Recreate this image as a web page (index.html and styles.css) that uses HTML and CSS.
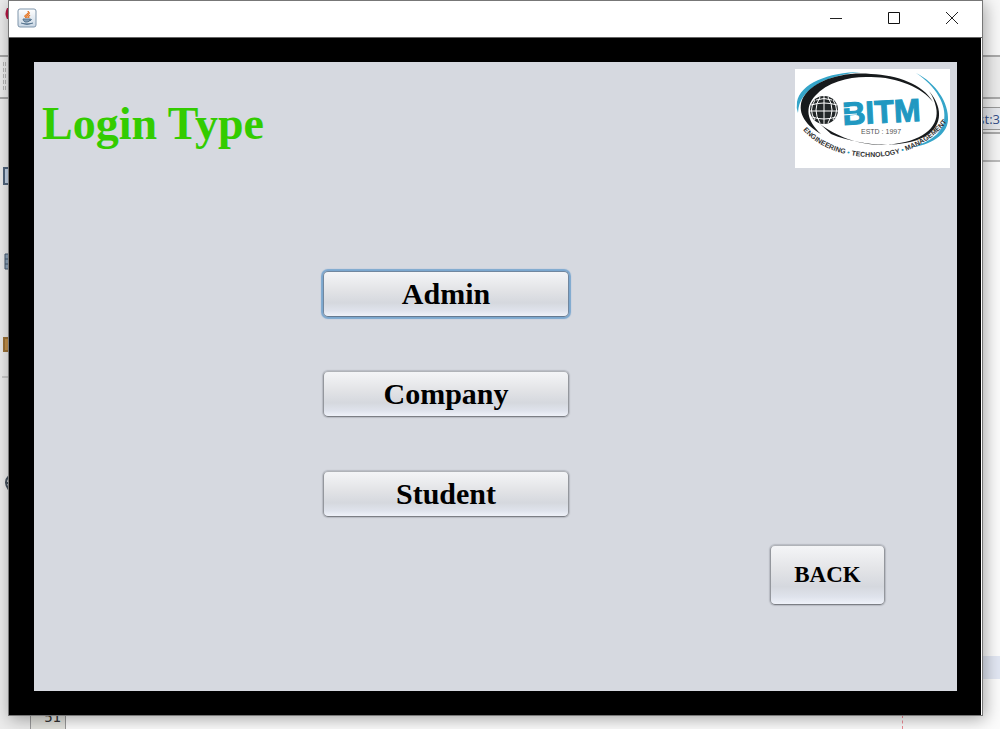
FILE: index.html
```html
<!DOCTYPE html>
<html lang="en">
<head>
<meta charset="utf-8">
<title>Login Type</title>
<link rel="stylesheet" href="styles.css">
</head>
<body>
<div class="desktop">
  <svg class="edge edge-left" width="9" height="729" viewBox="0 0 9 729" aria-hidden="true">
    <path d="M9 8H7Q4 14 7 19H9Z" fill="#b51643"/>
    <path d="M0 56H9M0 98H9" stroke="#a5a5a5" stroke-width="2"/>
    <path d="M3.500 62V92M5.500 62V92" stroke="#b5b5b5" stroke-dasharray="4 2"/>
    <path d="M9 168H4V184H9" fill="#c4d4e8" stroke="#50647c" stroke-width="2"/>
    <path d="M5 254H9V269H5ZM5 259H9M5 264H9" fill="#8fa6bd" stroke="#44586e"/>
    <path d="M9 338H4V351H9" fill="#c4914a" stroke="#9c7238" stroke-width="2"/>
    <path d="M2 377H9" stroke="#aaa"/>
    <path d="M9 476Q3 482 9 490M6 483H9" fill="none" stroke="#44505c" stroke-width="2"/>
  </svg>
  <div class="edge edge-right" aria-hidden="true">
    <div class="tab-gap"></div>
    <div class="tab-bar"><span>st:3</span></div>
    <div class="tool-bar"></div>
    <div class="editor-row"></div>
  </div>
  <div class="edge edge-bottom" aria-hidden="true"><span class="gutter">51</span><span class="margin-line"></span></div>

  <div class="window">
    <header class="title-bar">
      <svg class="java" width="20" height="20" viewBox="0 0 20 20" role="img" aria-label="Java">
        <defs><linearGradient id="jg" x2="0" y2="1"><stop stop-color="#fff"/><stop offset="1" stop-color="#c8d6e4"/></linearGradient></defs>
        <rect x="1" y="1" width="18" height="18" rx="2" fill="url(#jg)" stroke="#7e95ab"/>
        <path d="M9 10Q6 8 10 6Q12 5 11 3Q14 5 11 7Q9 8 10 10M11 10Q10 8 13 7Q11 9 12 10" fill="#ed9450" stroke="#e37a30"/>
        <path d="M6 11H13Q13 14 10 14H8Q6 13 6 11M13 11Q16 11 13 13M4 15Q10 18 16 15" fill="#839bb2" stroke="#587690"/>
      </svg>
      <div class="window-controls">
        <button type="button" aria-label="Minimize"><svg width="14" height="14" viewBox="0 0 14 14"><path d="M1 7.500H13" stroke="#222"/></svg></button>
        <button type="button" aria-label="Maximize"><svg width="14" height="14" viewBox="0 0 14 14"><path d="M1.500 1.500H12.500V12.500H1.500Z" fill="none" stroke="#111"/></svg></button>
        <button type="button" aria-label="Close"><svg width="14" height="14" viewBox="0 0 14 14"><path d="M1 1L13 13M13 1L1 13" stroke="#222"/></svg></button>
      </div>
    </header>
    <div class="frame">
      <main class="panel">
        <div class="heading">
          <h1>Login Type</h1>
          <svg class="logo" width="155" height="99" viewBox="0 0 155 99" role="img" aria-label="BITM Engineering Technology Management">
            <rect width="155" height="99" fill="#fff"/>
            <path d="M66 3C33 3 5 15 2 33Q1 39 3 44Q3 25 28 12Q45 5 66 3Z" fill="#35a5c9"/>
            <path d="M76 5C45 2 15 13 7 31C2 45 12 57 26 65C11 51 10 38 20 27C33 12 56 7 76 8C102 8 128 19 138 33C128 15 102 6 76 5Z" fill="#171a1c"/>
            <path d="M134 22C150 41 146 59 129 68C106 80 65 77 36 65L25 55C43 69 72 79 99 75C131 71 145 56 141 38Q139 29 134 22Z" fill="#171a1c"/>
            <path d="M121 4C141 17 152 36 149 52C147 65 133 74 114 79C136 76 152 66 153 51C154 34 141 14 121 4Z" fill="#35a5c9"/>
            <circle cx="29" cy="41" r="14" fill="#222627"/>
            <path d="M29 27V55M25 28Q17 41 25 54M33 28Q41 41 33 54M20 31Q13 41 20 51M38 31Q45 41 38 51M16 36Q29 32 42 36M15 42H43M17 48Q29 52 41 48M21 31Q29 28 37 31" fill="none" stroke="#fff"/>
            <text class="logo-name" x="48" y="56" transform="rotate(-3 48 56)">BITM</text>
            <path d="M47 39L62 38M47 46L62 45" stroke="#fff"/>
            <text class="logo-year" x="66" y="65">ESTD : 1997</text>
            <path id="motto" d="M8 61C38 96 119 103 157 46" fill="none"/>
            <text class="logo-motto"><textPath href="#motto">ENGINEERING <tspan fill="#2597bc">•</tspan> TECHNOLOGY <tspan fill="#2597bc">•</tspan> MANAGEMENT</textPath></text>
          </svg>
        </div>
        <nav class="choices" aria-label="Login type">
          <button type="button" class="btn selected">Admin</button>
          <button type="button" class="btn">Company</button>
          <button type="button" class="btn">Student</button>
        </nav>
        <button type="button" class="btn back">BACK</button>
      </main>
    </div>
  </div>
</div>
</body>
</html>
```
FILE: styles.css
```css
* { box-sizing: border-box; }
body { margin: 0; font-family: "Liberation Serif", serif; }
.desktop {
  position: relative;
  display: flex;
  min-height: 100vh;
  padding: 0 17px 13px 8px;
  background: #fcfcfc;
  overflow: hidden;
}
.edge { position: absolute; }
.edge-left { left: 0; top: 0; background: #ececec; }
.edge-right { top: 0; right: 0; bottom: 0; width: 18px; }
.tab-gap { height: 99px; background: linear-gradient(#f8f8f8 0 55px, #aaa 55px 57px, #ececec 57px 97px, #aaa 97px); }
.tab-bar {
  height: 35px;
  padding-top: 8px;
  background: #f0f0f0;
  border-bottom: 2px solid #aaa;
}
.tab-bar span {
  display: flex;
  justify-content: flex-end;
  height: 23px;
  border: 1px solid #999;
  border-right: 0;
  background: #e6e8ec;
  color: #334f88;
  font: 13px/23px "Open Sans", sans-serif;
}
.tool-bar { height: 28px; border-bottom: 2px solid #bbb; background: #f5f5f5; }
.editor-row { height: 23px; margin-top: 494px; background: #e2e7f3; }
.edge-bottom { left: 0; right: 0; bottom: 0; height: 14px; padding: 0 97px 0 30px; display: flex; justify-content: space-between; background: linear-gradient(90deg, #ececec 30px, #fcfcfc 30px); overflow: hidden; }
.gutter {
  width: 36px;
  padding-right: 4px;
  border: solid #999;
  border-width: 0 1px;
  background: #e4e4df;
  color: #333;
  font: 14px/4px "DejaVu Sans Mono", monospace;
  text-align: right;
}
.margin-line { border-left: 1px dashed #f08c96; }
.window {
  position: relative;
  display: flex;
  flex: 1;
  flex-direction: column;
  border: 1px solid #777;
  background: #fff;
  box-shadow: 2px 3px 16px rgba(0, 0, 0, 0.35);
}
.title-bar {
  display: flex;
  align-items: center;
  justify-content: space-between;
  height: 37px;
  padding: 0 1px 2px 8px;
  border-bottom: 1px solid #666;
}
.window-controls { display: flex; }
.window-controls button {
  display: grid;
  place-items: center;
  width: 58px;
  height: 34px;
  padding: 0;
  border: 0;
  background: none;
}
.frame { display: flex; flex: 1; padding: 24px 24px 24px 25px; margin-right: 1px; background: #000; }
.panel { display: flex; flex: 1; flex-direction: column; background: #d6d9e0; }
.heading { display: flex; justify-content: space-between; padding: 7px 7px 0 8px; }
h1 { margin: 29px 0 0; color: #33cc00; font-size: 46px; line-height: 52px; }
.choices { display: flex; flex-direction: column; align-items: center; gap: 54px; margin-top: 103px; padding-right: 99px; }
.btn {
  width: 246px;
  height: 46px;
  padding: 0;
  border: 1px solid;
  border-color: #b0b3b8 #94979d #7c7f85;
  border-radius: 5px;
  background: linear-gradient(#f4f5f7, #e3e4e7 40%, #d5d8de 70%, #dfe3ec 88%, #eff2f9);
  box-shadow: 0 0 1px 1px rgba(90, 95, 105, 0.25);
  color: #000;
  font: bold 30px/44px "Liberation Serif", serif;
}
.selected { border-color: #71879f #71879f #657a91; box-shadow: 0 0 1px 2px #7ba7cf; }
.back { align-self: flex-end; width: 115px; height: 60px; margin: 28px 72px 0 0; font-size: 23px; }
.logo { display: block; }
.logo-name { fill: #2098c1; stroke: #2098c1; stroke-width: 1px; font: bold 32px "Liberation Sans", sans-serif; }
.logo-year { fill: #555; font: 7px "Liberation Sans", sans-serif; }
.logo-motto { fill: #333; font: bold 7px "Liberation Sans", sans-serif; }
```
